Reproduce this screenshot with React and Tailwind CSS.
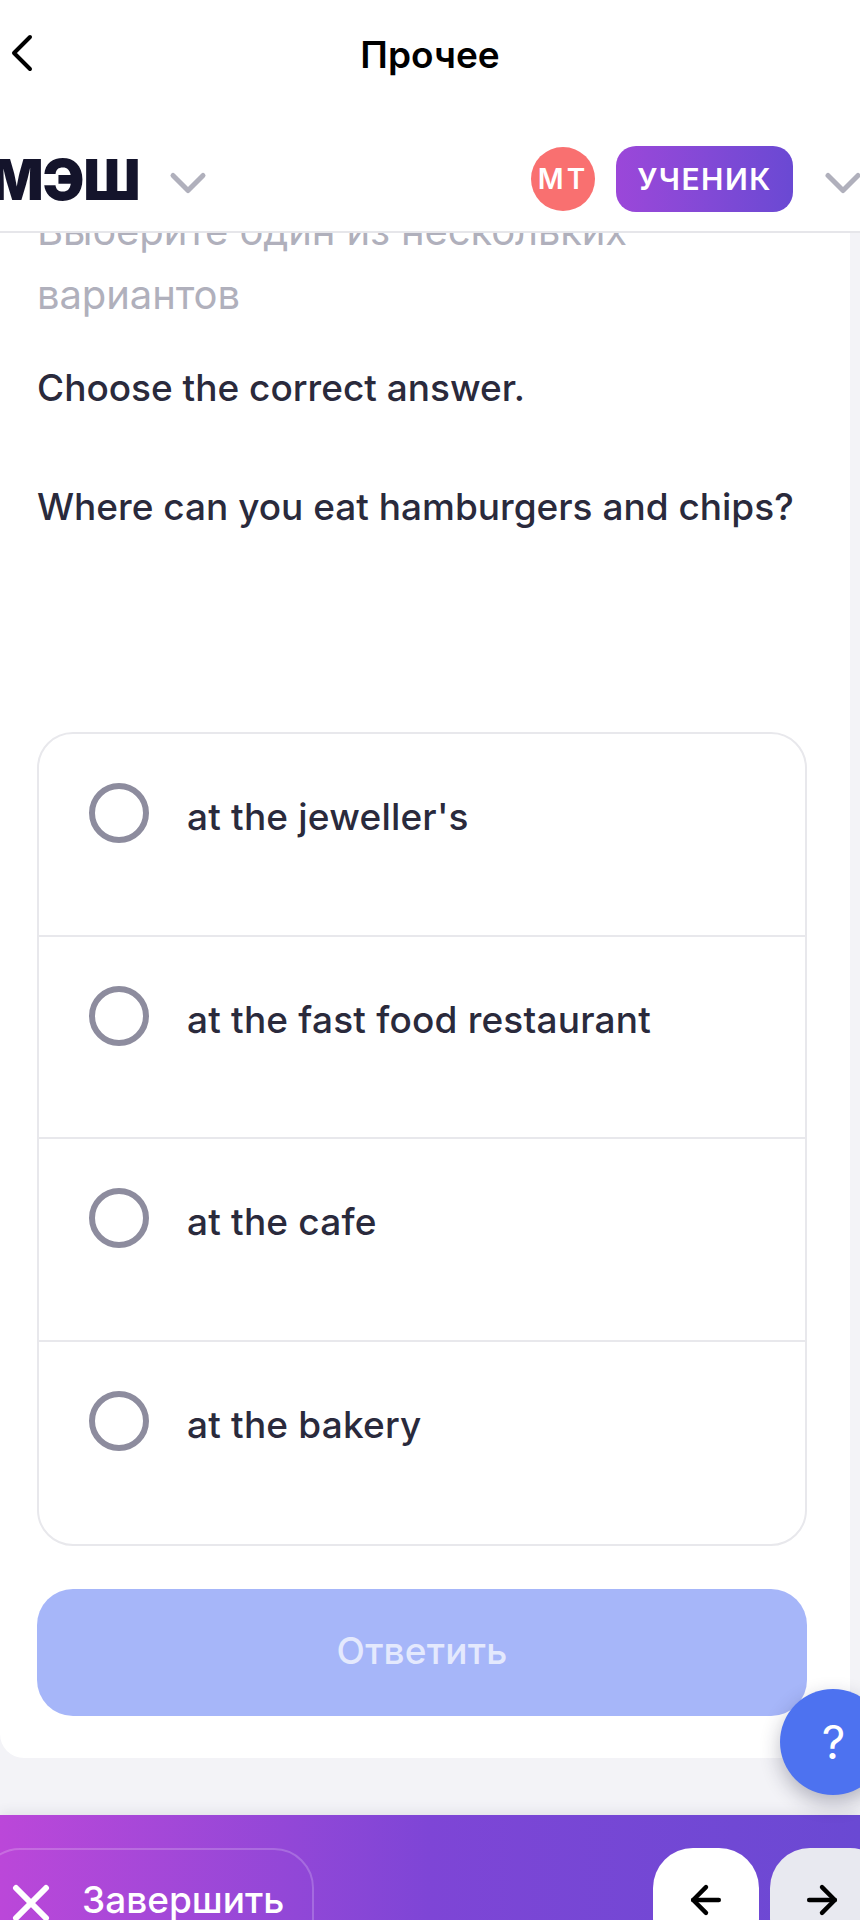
import { ChevronDown, ArrowLeft, ArrowRight, X } from 'lucide-react';

const options = ["at the jeweller's", 'at the fast food restaurant', 'at the cafe', 'at the bakery'];

function OptionRow({ label, last }) {
    return (
        <div className={`flex h-[202.5px] items-start pl-[50px] pt-[49px] ${last ? '' : 'border-b-2 border-[#e8e8ec]'}`}>
            <div className="h-[60px] w-[60px] shrink-0 rounded-full border-[6px] border-[#8d8c9e]" />
            <span className="ml-[38px] text-[37px] leading-[68px] font-[450] tracking-[0.2px] text-[#2a2a3c]">{label}</span>
        </div>
    );
}

export default function App() {
    return (
        <div className="relative flex h-[1920px] w-[860px] flex-col overflow-hidden bg-[#f3f3f7] font-['Inter',sans-serif]">
            <header className="z-10 h-[233px] shrink-0 border-b-2 border-[#e6e6ea] bg-white">
                <div className="relative flex h-[110px] items-center justify-center">
                    <svg className="absolute top-[34px] left-[10px] h-[38px] w-[24px]" viewBox="0 0 24 38" fill="none" stroke="#000" strokeWidth="4" strokeLinecap="round" strokeLinejoin="round">
                        <path d="M20 3 L4 19 L20 35" />
                    </svg>
                    <h1 className="text-[37px] font-semibold text-black">Прочее</h1>
                </div>
                <div className="mt-[36px] flex h-[66px] items-center justify-between">
                    <div className="flex items-center">
                        <span className="-ml-[10px] pt-[2px] text-[56px] leading-none font-black tracking-[-1px] text-[#14142b]">МЭШ</span>
                        <ChevronDown className="mt-[7px] ml-[19px] h-[60px] w-[60px] text-[#b0b0bc]" strokeWidth={2} />
                    </div>
                    <div className="flex items-center">
                        <div className="flex h-[64px] w-[64px] items-center justify-center rounded-full bg-[#f97070] text-[28px] font-semibold tracking-[3px] text-white">МТ</div>
                        <div className="ml-[21px] flex h-[66px] w-[177px] items-center justify-center rounded-[20px] bg-gradient-to-r from-[#9b47d9] to-[#6a49d3] text-[30px] font-semibold tracking-[1.5px] text-white">УЧЕНИК</div>
                        <ChevronDown className="mt-[7px] mr-[-13px] ml-[20px] h-[60px] w-[60px] text-[#b0b0bc]" strokeWidth={2} />
                    </div>
                </div>
            </header>

            <main className="min-h-0 flex-1 overflow-hidden">
                <div className="-mt-[34px] h-[1559px] w-[850px] rounded-b-[24px] bg-white pl-[37px]">
                    <p className="w-[640px] text-[40px] leading-[64px] tracking-[-0.1px] text-[#b0b0bc]">Выберите один из нескольких вариантов</p>
                    <p className="mt-[29px] text-[37px] leading-[64px] font-[450] text-[#2a2a3c]">Choose the correct answer.</p>
                    <p className="mt-[55px] text-[37px] leading-[64px] font-[450] text-[#2a2a3c]">Where can you eat hamburgers and chips?</p>

                    <div className="mt-[193px] w-[770px] overflow-hidden rounded-[36px] border-2 border-[#e8e8ec]">
                        {options.map((option, index) => (
                            <OptionRow key={option} label={option} last={index === options.length - 1} />
                        ))}
                    </div>

                    <button className="mt-[43px] flex h-[127px] w-[770px] items-center justify-center rounded-[36px] bg-[#a6b6f9] pb-[4px] text-[37px] font-medium tracking-[0.2px] text-[#e4e9fd]">
                        Ответить
                    </button>
                </div>
            </main>

            <button className="absolute top-[1689px] left-[780px] flex h-[106px] w-[106px] items-center justify-center rounded-full bg-[#4d72f0] pl-[1px] text-[46px] text-white shadow-[0_8px_20px_rgba(30,30,60,0.3)]">
                ?
            </button>

            <footer className="flex h-[105px] shrink-0 items-start justify-between overflow-hidden bg-gradient-to-r from-[#bb47d9] via-[#7e45d6] to-[#6a49d3] pt-[33px] shadow-[0_-4px_10px_rgba(60,60,90,0.08)]">
                <button className="-ml-[20px] flex h-[110px] w-[334px] items-start rounded-[40px] border-2 border-white/20 pt-[23px] pl-[19px] text-[37px] font-medium text-white">
                    <X className="h-[60px] w-[60px] shrink-0" strokeWidth={2.4} />
                    <span className="mt-[2px] ml-[21px] leading-[50px]">Завершить</span>
                </button>
                <div className="flex gap-[11px]">
                    <div className="flex h-[110px] w-[106px] items-start justify-center rounded-[40px] bg-white pt-[30px]">
                        <ArrowLeft className="h-[44px] w-[44px] text-black" strokeWidth={2.4} />
                    </div>
                    <div className="-mr-[30px] flex h-[110px] w-[120px] items-start justify-start rounded-[40px] bg-[#e8e9f0] pt-[30px] pl-[30px]">
                        <ArrowRight className="h-[44px] w-[44px] text-black" strokeWidth={2.4} />
                    </div>
                </div>
            </footer>
        </div>
    );
}
